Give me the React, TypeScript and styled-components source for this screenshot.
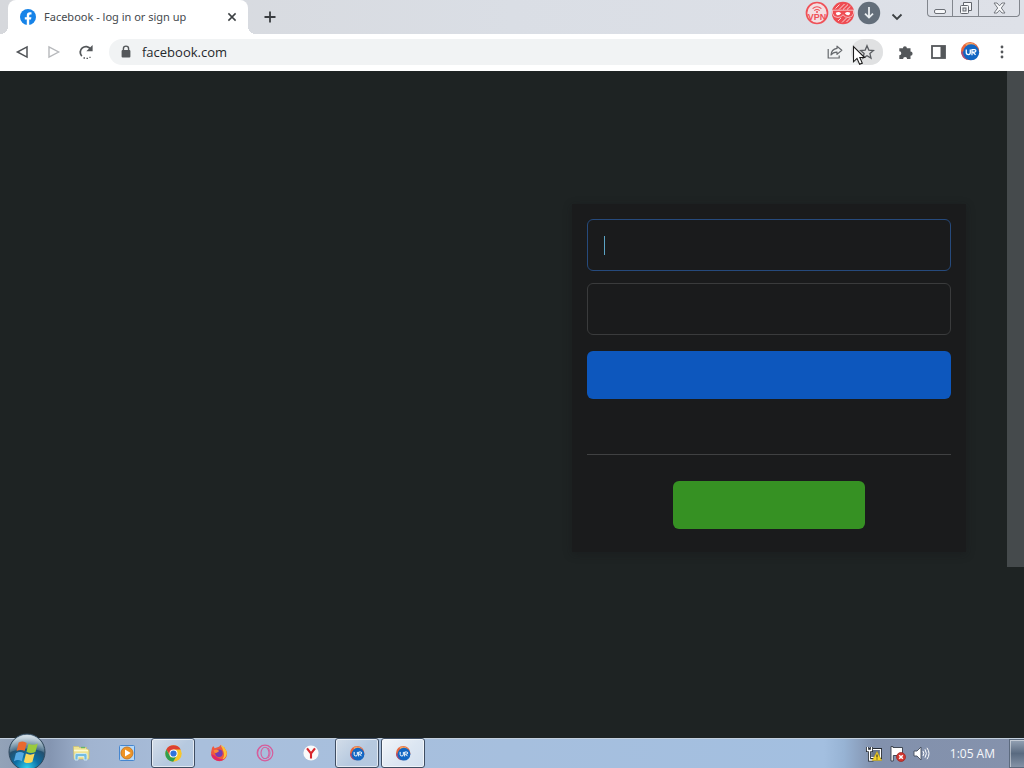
import React from "react";
import styled, { createGlobalStyle } from "styled-components";

const GlobalStyle = createGlobalStyle`
  *, *::before, *::after { box-sizing: border-box; }
  html, body { margin: 0; padding: 0; }
  body {
    background: #1e2323;
    font-family: "Open Sans", "Noto Sans", sans-serif;
    color: #3c4043;
  }
  button { font: inherit; color: inherit; border: 0; padding: 0; background: none; }
  svg { display: block; flex: none; }
`;

const Desktop = styled.div`
  position: relative;
  display: flex;
  flex-direction: column;
  min-height: 100vh;
  overflow: hidden;
`;

/* ---------- browser chrome ---------- */

const TabStrip = styled.header`
  display: flex;
  align-items: flex-start;
  height: 34px;
  padding: 0 4px 0 8px;
  background: linear-gradient(90deg, #d6d8dc, #dadee5 50%, #dee1e8);
`;

const Tab = styled.div`
  position: relative;
  display: flex;
  align-items: center;
  width: 240px;
  height: 34px;
  padding: 0 9px 0 12px;
  gap: 8px;
  border-radius: 8px 8px 0 0;
  background: #fff;

  &::before, &::after {
    content: "";
    position: absolute;
    bottom: 0;
    width: 8px;
    height: 8px;
  }
  &::before { left: -8px; background: radial-gradient(circle at 0 0, transparent 8px, #fff 8px); }
  &::after { right: -8px; background: radial-gradient(circle at 100% 0, transparent 8px, #fff 8px); }
`;

const TabTitle = styled.span`
  flex: 1;
  font-family: "Noto Sans", "Open Sans", sans-serif;
  font-size: 11px;
  line-height: 16px;
  white-space: nowrap;
  color: #45494d;
`;

const IconButton = styled.button<{ $w?: number; $h?: number }>`
  display: flex;
  align-items: center;
  justify-content: center;
  flex: none;
  width: ${(p) => p.$w ?? 32}px;
  height: ${(p) => p.$h ?? 26}px;
`;

const StripSpacer = styled.div`
  flex: 1;
`;

const Extensions = styled.div`
  display: flex;
  gap: 2px;
  height: 26px;
  align-items: center;
`;

const WindowButtons = styled.div`
  display: flex;
  height: 17px;
  margin-left: 15px;
  border: 1px solid #82868d;
  border-top: 0;
  border-radius: 0 0 4px 4px;
  overflow: hidden;
`;

const WindowButton = styled.button<{ $w: number }>`
  display: flex;
  align-items: center;
  justify-content: center;
  width: ${(p) => p.$w}px;
  height: 16px;
  & + & { border-left: 1px solid #82868d; }
`;

const Toolbar = styled.nav`
  display: flex;
  align-items: center;
  height: 37px;
  padding: 0 6px 2px;
  background: #fff;
`;

const AddressBar = styled.div`
  display: flex;
  align-items: center;
  flex: 1;
  height: 26px;
  margin: 0 7px;
  padding-left: 12px;
  border-radius: 13px;
  background: #f1f3f4;
`;

const AddressInput = styled.input`
  flex: 1;
  min-width: 0;
  margin-left: 11px;
  padding: 0;
  border: 0;
  outline: 0;
  background: none;
  font: 13px/20px "Open Sans", "Noto Sans", sans-serif;
  color: #26292c;
`;

const StarButton = styled(IconButton)`
  border-radius: 13px;
  background: #e0e1e2;
`;

/* ---------- page ---------- */

const Viewport = styled.main`
  display: flex;
  flex: 1;
  background: #1e2323;
`;

const PageBody = styled.div`
  display: flex;
  flex: 1;
  justify-content: flex-end;
  align-items: flex-start;
  padding: 133px 41px 32px;
`;

const LoginCard = styled.form`
  display: flex;
  flex-direction: column;
  width: 394px;
  padding: 15px;
  padding-bottom: 23px;
  background: #1a1b1c;
  box-shadow: 0 2px 8px rgba(20, 20, 22, 0.35);
`;

const FieldWrap = styled.label`
  position: relative;
  display: block;
  margin-bottom: 12px;
`;

const Field = styled.input<{ $active?: boolean }>`
  display: block;
  width: 100%;
  height: 52px;
  padding: 14px 16px;
  border: 1px solid ${(p) => (p.$active ? "#264a7c" : "#3a3b3c")};
  border-radius: 6px;
  outline: 0;
  background: #1a1b1c;
  color: #e4e6eb;
  font-size: 17px;
`;

const Caret = styled.span`
  position: absolute;
  left: 17px;
  top: 17px;
  width: 1px;
  height: 19px;
  background: #5ba3c4;
`;

const LoginButton = styled.button`
  height: 48px;
  margin-top: 4px;
  border-radius: 6px;
  background: #0d57bd;
`;

const Divider = styled.hr`
  width: 100%;
  height: 1px;
  margin: 55px 0 26px;
  border: 0;
  background: #404142;
`;

const CreateButton = styled.button`
  align-self: center;
  width: 192px;
  height: 48px;
  border-radius: 6px;
  background: #369123;
`;

const ScrollTrack = styled.div`
  width: 17px;
  background: #1e2323;
`;

const ScrollThumb = styled.div`
  height: 74.4%;
  background: #454a4c;
`;

/* ---------- taskbar ---------- */

const Taskbar = styled.footer`
  display: flex;
  height: 30px;
  border-top: 1px solid #c3d0de;
  background: linear-gradient(
    90deg,
    #93a3b8 0,
    #8495b1 50px,
    #a1b4d0 90px,
    #a9bfdc 200px,
    #a3bfe0 calc(100% - 200px),
    #97b3d4 calc(100% - 180px),
    #8291ad calc(100% - 150px),
    #8592ac 100%
  );
`;

const StartButton = styled.button`
  position: relative;
  width: 59px;
  & svg { position: absolute; left: 7px; bottom: -6px; }
`;

const TaskList = styled.div`
  display: flex;
  gap: 2px;
  flex: 1;
`;

const Task = styled.button<{ $state?: "open" | "front" }>`
  display: flex;
  align-items: center;
  justify-content: center;
  width: 44px;
  height: 30px;
  margin-top: -1px;
  ${(p) =>
    p.$state &&
    `
    border: 1px solid #3f4e63;
    border-radius: 3px;
    box-shadow: inset 0 0 0 1px rgba(255, 255, 255, 0.6);
    background: ${
      p.$state === "front"
        ? "linear-gradient(135deg, #f2f5f9, #dce6f2 55%, #d2dfee)"
        : "linear-gradient(135deg, #d3dde9, #b6c9df 55%, #b4c8e0)"
    };
  `}
`;

const Tray = styled.div`
  display: flex;
  align-items: center;
`;

const TrayButton = styled.button`
  display: flex;
  align-items: center;
  justify-content: center;
  width: 24px;
  height: 29px;
`;

const Clock = styled.time`
  padding: 0 14px 0 16px;
  font-size: 12px;
  line-height: 16px;
  color: #f6f8fb;
  white-space: nowrap;
`;

const ShowDesktop = styled.button`
  width: 15px;
  height: 29px;
  border: 1px solid #5c6a7e;
  border-right: 0;
  box-shadow: inset 1px 1px 0 rgba(255, 255, 255, 0.45);
  background: linear-gradient(180deg, #95a3b5, #596a80 50%, #8492a6);
`;

const Pointer = styled.svg`
  position: absolute;
  left: 852px;
  top: 45px;
`;

/* ---------- icons ---------- */

const FacebookIcon = () => (
  <svg width="16" height="16" viewBox="0 0 16 16">
    <circle cx="8" cy="8" r="8" fill="#1683e8" />
    <path d="M6.8 16v-5.5H4.8V8.2h2V6.5c0-2.1 1.2-3.2 3-3.2.9 0 1.7.1 1.7.1v2h-1c-1 0-1.3.6-1.3 1.3v1.5h2.2l-.4 2.3H9.2V16z" fill="#fff" />
  </svg>
);

const UrIcon = ({ size = 18 }: { size?: number }) => (
  <svg width={size} height={size} viewBox="0 0 18 18">
    <circle cx="8.6" cy="8.6" r="8.6" fill="#e8663d" />
    <path d="M4 2Q9-1 14 3L9 9z" fill="#f4a261" />
    <path d="M0 9a8.5 8.5 0 0 0 6 8L8 9z" fill="#a84d78" />
    <circle cx="9.6" cy="9.8" r="7.6" fill="#1266c3" />
    <path d="M5 7.1v2.9q0 2 2 2h.2q1.6 0 1.6-2V7.1M10.4 12.5V7.2h2.4q1.3 0 1.3 1.2t-1.4 1.2h-1.4l2.5 2.6" fill="none" stroke="#fff" strokeWidth="1.2" />
  </svg>
);

const ChromeIcon = () => (
  <svg width="17" height="17" viewBox="0 0 18 18">
    <circle cx="9" cy="9" r="8.7" fill="#f7c62b" />
    <path d="M1.4 4.8A8.7 8.7 0 0 1 16.6 4.8H9L5.4 11.2z" fill="#dd4132" />
    <path d="M1.4 4.8A8.7 8.7 0 0 0 8.6 17.7l4-6.6L9 13H6z" fill="#2f9e50" />
    <circle cx="9" cy="9" r="4.3" fill="#fff" />
    <circle cx="9" cy="9" r="3.3" fill="#2f73dc" />
  </svg>
);

const StartOrb = () => (
  <svg width="40" height="42" viewBox="0 0 40 42">
    <defs>
      <radialGradient id="orb" cx="50%" cy="95%" r="85%">
        <stop offset="0" stopColor="#30d2ee" />
        <stop offset=".4" stopColor="#0d6fa5" />
        <stop offset=".72" stopColor="#23506f" />
        <stop offset="1" stopColor="#a4b9c6" />
      </radialGradient>
      <linearGradient id="gloss" x2="0" y2="1">
        <stop offset="0" stopColor="#e2eaf0" stopOpacity=".85" />
        <stop offset="1" stopColor="#7896aa" stopOpacity=".35" />
      </linearGradient>
    </defs>
    <circle cx="20" cy="20" r="18" fill="url(#orb)" stroke="#31485c" />
    <path d="M3 20a17 17 0 0 1 34 0Q20 13 3 20z" fill="url(#gloss)" />
    <g transform="translate(-2.6 -3) scale(1.15)">
      <path d="M12.4 11.8q4-2 7 .4l-1.8 7q-3.5-2-7 0z" fill="#e9682f" />
      <path d="M21 12.8q4 2 8-.2l-2 7.3q-4 2-7.8-.1z" fill="#9aca3c" />
      <path d="M10 21q3.5-2 7 0l-1.9 7q-3.2-2-6.8 0z" fill="#56a9e4" />
      <path d="M18.7 21.4q3.7 2 7.6 0l-2 7.4q-3.7 1.8-7.4-.2z" fill="#fbd75a" />
    </g>
  </svg>
);

const VpnIcon = () => (
  <svg width="24" height="24" viewBox="0 0 24 24">
    <circle cx="12" cy="12" r="10.5" fill="#f3dfe2" stroke="#ef5158" strokeWidth="1.7" />
    <path d="M7.6 7.6q4.4-3.7 8.8 0M9.3 9.6q2.7-2.2 5.4 0" fill="none" stroke="#ef5158" strokeWidth="1.2" />
    <circle cx="12" cy="11" r="1" fill="#ef5158" />
    <text x="12" y="18.8" textAnchor="middle" fontFamily="Liberation Sans, sans-serif" fontWeight="700" fontSize="9" fill="#ef5158">VPN</text>
  </svg>
);

const MaskIcon = () => (
  <svg width="24" height="24" viewBox="0 0 24 24">
    <circle cx="12" cy="12" r="11.2" fill="#ee4c52" />
    <path d="M4.5 7.5L8.5 3.5M8 8.5L13.5 3M12 8.5L17 3.6M16 8.5l3.4-3.2M7 20l3-3M11 21.5l4.5-4.5M15.5 21l4-4" stroke="#f9d3d5" strokeWidth="1" />
    <path d="M1.5 9.2h21v3.3q-1 4-5.4 4-3.1 0-5.1-2.7-2 2.7-5.1 2.7-4.4 0-5.4-4z" fill="#ee4c52" stroke="#f7dadd" strokeWidth=".8" />
    <path d="M4.8 11.7q3-1.8 5.4.6-1.8 2.5-3.9 1.9-1.5-.7-1.5-2.5zM19.2 11.7q-3-1.8-5.4.6 1.8 2.5 3.9 1.9 1.5-.7 1.5-2.5z" fill="#fff" />
  </svg>
);

const DownloadIcon = () => (
  <svg width="24" height="24" viewBox="0 0 24 24">
    <circle cx="12" cy="12" r="11.2" fill="#636e7a" />
    <path d="M12 6v10.5M8 12.6l4 4 4-4" fill="none" stroke="#e9edf0" strokeWidth="1.8" />
  </svg>
);

const FirefoxIcon = () => (
  <svg width="18" height="18" viewBox="0 0 18 18">
    <path d="M2 4l1.2-2 1.5 2.2L9 2.8 11 .8l.7 2.6L14 3l3 5q.7 4.6-2.5 7.3Q11 18 7 16.8 1 15 1 8.8z" fill="#ee5940" />
    <path d="M11 .8q4 2.2 5.6 6.2Q18 13 12 16q3-4 1.6-8z" fill="#fcc136" />
    <path d="M1.2 10q1.3 6 7.6 7 3.5 0 5.7-2-6 .8-9-3z" fill="#df286b" />
    <circle cx="9" cy="9.2" r="3.7" fill="#753bb1" />
    <path d="M3.5 6.6q3-2 5.8.4L6.8 8.7l-2 .2z" fill="#fb8b35" />
  </svg>
);

export default function App() {
  return (
    <Desktop>
      <GlobalStyle />

      <TabStrip>
        <Tab>
          <FacebookIcon />
          <TabTitle>Facebook - log in or sign up</TabTitle>
          <IconButton $w={14} $h={16} aria-label="Close tab">
            <svg width="10" height="10" viewBox="0 0 10 10">
              <path d="M1.4 1.4l7.2 7.2M8.6 1.4L1.4 8.6" stroke="#3c4043" strokeWidth="1.5" />
            </svg>
          </IconButton>
        </Tab>
        <IconButton $w={44} $h={34} aria-label="New tab">
          <svg width="12" height="12" viewBox="0 0 12 12">
            <path d="M6 .5v11M.5 6h11" stroke="#3a3d41" strokeWidth="1.8" />
          </svg>
        </IconButton>
        <StripSpacer />
        <Extensions>
          <IconButton $w={24} aria-label="VPN"><VpnIcon /></IconButton>
          <IconButton $w={24} aria-label="Private mode"><MaskIcon /></IconButton>
          <IconButton $w={24} aria-label="Downloads"><DownloadIcon /></IconButton>
        </Extensions>
        <IconButton $w={31} $h={33} aria-label="Search tabs">
          <svg width="12" height="8" viewBox="0 0 12 8">
            <path d="M1.5 1.5L6 6l4.5-4.5" fill="none" stroke="#3c4043" strokeWidth="1.8" />
          </svg>
        </IconButton>
        <WindowButtons>
          <WindowButton $w={24} aria-label="Minimize">
            <svg width="12" height="14" viewBox="0 0 12 14">
              <rect x=".5" y="8.5" width="11" height="4" rx="1.5" fill="#f7f8fa" stroke="#6c7077" />
            </svg>
          </WindowButton>
          <WindowButton $w={26} aria-label="Restore">
            <svg width="14" height="14" viewBox="0 0 14 14">
              <path d="M4.5 4V1.5h8v8H10" fill="#f7f8fa" stroke="#62666d" />
              <rect x="1.5" y="4.5" width="8" height="8" rx="1" fill="#f7f8fa" stroke="#62666d" />
              <rect x="4" y="7" width="3" height="3" fill="#e2e5ea" stroke="#62666d" />
            </svg>
          </WindowButton>
          <WindowButton $w={41} aria-label="Close">
            <svg width="13" height="12" viewBox="0 0 13 12">
              <path d="M1 1h3l2.5 2.8L9 1h3L8.3 6 12 11H9L6.5 8.2 4 11H1l3.7-5z" fill="#f7f8fa" stroke="#74787f" />
            </svg>
          </WindowButton>
        </WindowButtons>
      </TabStrip>

      <Toolbar>
        <IconButton aria-label="Back">
          <svg width="14" height="14" viewBox="0 0 14 14">
            <path d="M12 1.9v10.2L2.4 7z" fill="none" stroke="#505357" strokeWidth="1.5" />
          </svg>
        </IconButton>
        <IconButton aria-label="Forward">
          <svg width="14" height="14" viewBox="0 0 14 14">
            <path d="M2 1.9v10.2L11.6 7z" fill="none" stroke="#b7b9bc" strokeWidth="1.4" />
          </svg>
        </IconButton>
        <IconButton aria-label="Reload">
          <svg width="16" height="16" viewBox="0 0 16 16">
            <path d="M3.8 12.2A5.7 5.7 0 1 1 12.6 5" fill="none" stroke="#54575a" strokeWidth="1.8" />
            <path d="M14.6 1v6.3H8.3z" fill="#54575a" />
            <path d="M5.5 14h1.5M8.5 14.4H10M11.4 13.3h1.2" stroke="#54575a" strokeWidth="1.3" />
          </svg>
        </IconButton>
        <AddressBar>
          <svg width="10" height="14" viewBox="0 0 10 14">
            <path d="M2.4 6V3.7a2.6 2.6 0 0 1 5.2 0V6" fill="none" stroke="#54575a" strokeWidth="1.4" />
            <rect x=".6" y="5" width="8.8" height="7.6" rx="1" fill="#54575a" />
          </svg>
          <AddressInput aria-label="Address" defaultValue="facebook.com" spellCheck={false} />
          <IconButton aria-label="Share">
            <svg width="16" height="16" viewBox="0 0 16 16">
              <path d="M1.2 5v9h11v-2.5" fill="none" stroke="#66696d" strokeWidth="1.2" />
              <path d="M10 2.2l4.8 4.1L10 10.4V8.1Q6 8 4 11q.3-5.6 6-6.6z" fill="none" stroke="#66696d" strokeWidth="1.2" strokeLinejoin="round" />
            </svg>
          </IconButton>
          <StarButton aria-label="Bookmark">
            <svg width="16" height="16" viewBox="0 0 16 16">
              <path d="M8 1.8l1.8 4.3 4.7.4-3.6 3 1.1 4.6L8 11.7l-4 2.4 1.1-4.6-3.6-3 4.7-.4z" fill="none" stroke="#5a5d61" strokeWidth="1.3" />
            </svg>
          </StarButton>
        </AddressBar>
        <IconButton aria-label="Extensions">
          <svg width="16" height="16" viewBox="0 0 16 16">
            <path d="M1.3 4.2h3.6a2 2 0 1 1 4 0h3.6v3.4a2.1 2.1 0 1 1 0 4.2V15H9.1a2 2 0 0 0-4 0H1.3v-3.7a2 2 0 0 0 0-4z" fill="#54575a" />
          </svg>
        </IconButton>
        <IconButton aria-label="Side panel">
          <svg width="15" height="14" viewBox="0 0 15 14">
            <rect x="1" y="1" width="13" height="12" fill="#fff" stroke="#54575a" strokeWidth="1.8" />
            <path d="M9.5 1H14v12H9.5z" fill="#54575a" />
          </svg>
        </IconButton>
        <IconButton aria-label="Profile"><UrIcon size={19} /></IconButton>
        <IconButton aria-label="Menu">
          <svg width="4" height="14" viewBox="0 0 4 14">
            <g fill="#54575a">
              <circle cx="2" cy="2" r="1.4" />
              <circle cx="2" cy="7" r="1.4" />
              <circle cx="2" cy="12" r="1.4" />
            </g>
          </svg>
        </IconButton>
      </Toolbar>

      <Viewport>
        <PageBody>
          <LoginCard onSubmit={(e) => e.preventDefault()}>
            <FieldWrap>
              <Field $active type="text" aria-label="Email or phone number" />
              <Caret />
            </FieldWrap>
            <FieldWrap>
              <Field type="password" aria-label="Password" />
            </FieldWrap>
            <LoginButton type="submit" aria-label="Log in" />
            <Divider />
            <CreateButton type="button" aria-label="Create new account" />
          </LoginCard>
        </PageBody>
        <ScrollTrack>
          <ScrollThumb />
        </ScrollTrack>
      </Viewport>

      <Taskbar>
        <StartButton aria-label="Start"><StartOrb /></StartButton>
        <TaskList>
          <Task aria-label="Explorer">
            <svg width="18" height="16" viewBox="0 0 18 16">
              <path d="M1.5 3V1.5h5l1 1h7V4L17 5v9H2z" fill="#efe392" stroke="#c9bd70" strokeWidth=".7" />
              <path d="M2 5.5h14" stroke="#fffbd0" strokeWidth="1.6" />
              <path d="M9 2.5h4" stroke="#65b66a" strokeWidth="1.4" />
              <path d="M3 15V10q0-1.5 1.5-1.5h9Q15 8.5 15 10v5h-3v-3.5H6V15z" fill="#74bce1" stroke="#d9f2fa" strokeWidth=".8" />
            </svg>
          </Task>
          <Task aria-label="Media Player">
            <svg width="16" height="16" viewBox="0 0 16 16">
              <rect x=".5" y=".5" width="15" height="15" rx="1" fill="#b6dafa" stroke="#4686cf" />
              <circle cx="8" cy="8" r="6" fill="#ee9425" stroke="#c87a28" />
              <path d="M6 4.5v7L11.7 8z" fill="#fff" />
            </svg>
          </Task>
          <Task $state="open" aria-label="Chrome"><ChromeIcon /></Task>
          <Task aria-label="Firefox"><FirefoxIcon /></Task>
          <Task aria-label="Opera">
            <svg width="18" height="18" viewBox="0 0 18 18">
              <g fill="none" stroke="#d65c9b">
                <circle cx="9" cy="9" r="7.8" strokeWidth="1.2" />
                <ellipse cx="9" cy="9" rx="4" ry="5.7" strokeWidth="1.1" />
                <path d="M5.4 2.3a8 8 0 0 0 0 13.4M12 3.8a7.5 7.5 0 0 1 0 10.4" strokeWidth=".9" />
              </g>
            </svg>
          </Task>
          <Task aria-label="Yandex">
            <svg width="16" height="16" viewBox="0 0 16 16">
              <circle cx="8" cy="8" r="7.6" fill="#fafafa" />
              <path d="M4 3.3l4 5.2 4-5.2M8 8v5.5" fill="none" stroke="#d8272d" strokeWidth="2.1" />
            </svg>
          </Task>
          <Task $state="open" aria-label="UR Browser"><UrIcon size={15} /></Task>
          <Task $state="front" aria-label="UR Browser"><UrIcon size={15} /></Task>
        </TaskList>
        <Tray>
          <TrayButton aria-label="Network">
            <svg width="16" height="16" viewBox="0 0 16 16">
              <path d="M4.5 3.5h10v8h-10z" fill="#8491a4" stroke="#252b33" strokeWidth="3" />
              <path d="M4.5 3.5h10v8h-10z" fill="#67758b" stroke="#fff" strokeWidth="1.2" />
              <path d="M1.5 1v3.5h4V1M3.5 4v10h4" fill="none" stroke="#252b33" strokeWidth="3" />
              <path d="M1.5 1v3.5h4V1M3.5 4v10h4" fill="none" stroke="#fff" strokeWidth="1.3" />
              <path d="M11 5.5l4.7 9H6.3z" fill="#f5d328" stroke="#b59b1c" strokeWidth=".6" />
              <path d="M11 8.5v3M11 12.4v1.1" stroke="#292929" strokeWidth="1.1" />
            </svg>
          </TrayButton>
          <TrayButton aria-label="Action Center">
            <svg width="16" height="16" viewBox="0 0 16 16">
              <path d="M1 .5h2v1h9.5v8H3.3V15H1z" fill="#fff" stroke="#343b47" strokeWidth=".9" />
              <circle cx="11" cy="11" r="4.5" fill="#d23730" stroke="#962722" strokeWidth=".7" />
              <path d="M9.2 9.2l3.6 3.6M12.8 9.2l-3.6 3.6" stroke="#fff" strokeWidth="1.5" />
            </svg>
          </TrayButton>
          <TrayButton aria-label="Volume">
            <svg width="17" height="15" viewBox="0 0 17 15">
              <path d="M1 5h3l4-4v13l-4-4H1z" fill="#fff" stroke="#444d5b" strokeWidth=".9" />
              <path d="M10 5q1.6 2.5 0 5M12 3.3q2.8 4.2 0 8.4M14 1.8q4 5.7 0 11.4" fill="none" stroke="#fff" strokeWidth="1" />
            </svg>
          </TrayButton>
          <Clock>1:05 AM</Clock>
          <ShowDesktop aria-label="Show desktop" />
        </Tray>
      </Taskbar>

      <Pointer width="14" height="21" viewBox="0 0 14 21" aria-hidden="true">
        <path d="M1.5 1.5v15.3l3.5-3.4 2.6 5.9 2.7-1.2-2.5-5.6h4.8z" fill="#fff" stroke="#1d1d1d" strokeWidth="1.1" />
      </Pointer>
    </Desktop>
  );
}
